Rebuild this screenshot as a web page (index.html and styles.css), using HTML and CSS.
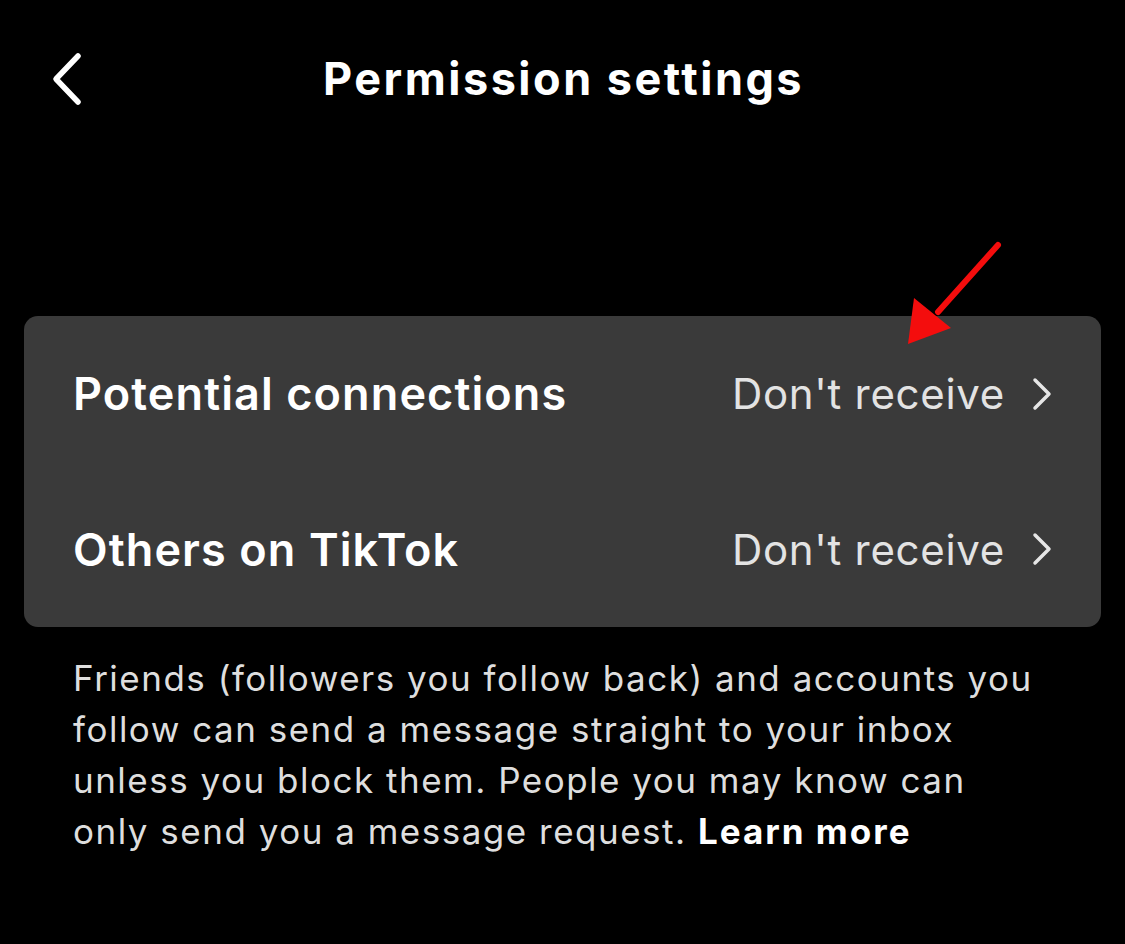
FILE: index.html
```html
<!DOCTYPE html>
<html lang="en">
<head>
  <meta charset="UTF-8" />
  <title>Permission settings</title>
  <link rel="stylesheet" href="styles.css">
</head>
<body>
  <div class="screen">
    <header class="topbar">
      <button class="back" type="button" aria-label="Back">
        <svg width="40" height="56" viewBox="0 0 40 56"><path d="M30 5 L8 28 L30 51" fill="none" stroke="#fff" stroke-width="5.5" stroke-linecap="round" stroke-linejoin="round"/></svg>
      </button>
      <h1>Permission settings</h1>
    </header>

    <div class="card">
      <div class="row">
        <span class="label">Potential connections</span>
        <span class="value">Don't receive
          <svg class="chev" width="22" height="34" viewBox="0 0 22 34"><path d="M4 3 L18 17 L4 31" fill="none" stroke="#e6e6e6" stroke-width="3.5" stroke-linecap="round" stroke-linejoin="round"/></svg>
        </span>
      </div>
      <div class="row">
        <span class="label">Others on TikTok</span>
        <span class="value">Don't receive
          <svg class="chev" width="22" height="34" viewBox="0 0 22 34"><path d="M4 3 L18 17 L4 31" fill="none" stroke="#e6e6e6" stroke-width="3.5" stroke-linecap="round" stroke-linejoin="round"/></svg>
        </span>
      </div>
    </div>

    <p class="note">Friends (followers you follow back) and accounts you follow can send a message straight to your inbox unless you block them. People you may know can only send you a message request. <strong>Learn more</strong></p>

    <svg class="pointer" width="120" height="130" viewBox="0 0 120 130">
      <line x1="105" y1="13" x2="45" y2="80" stroke="#f40d0d" stroke-width="6" stroke-linecap="round"/>
      <polygon points="15,112 21,66 58,96" fill="#f40d0d"/>
    </svg>
  </div>
</body>
</html>
```

FILE: styles.css
```css
* {
  box-sizing: border-box;
  margin: 0;
  padding: 0;
}
html, body {
  background: #000;
}
body {
  font-family: 'Inter', 'Liberation Sans', sans-serif;
  color: #fff;
}
.screen {
  position: relative;
  width: 1125px;
  height: 944px;
  padding: 0 24px;
}
.topbar {
  position: relative;
  height: 160px;
  display: flex;
  align-items: center;
  justify-content: center;
}
.topbar h1 {
  font-size: 45px;
  font-weight: 700;
  letter-spacing: 2.5px;
  margin-top: -3px;
  padding-left: 2px;
}
.back {
  position: absolute;
  left: 24px;
  top: 51px;
  background: none;
  border: none;
  display: flex;
}
.card {
  margin-top: 156px;
  background: #3a3a3a;
  border-radius: 14px;
  padding: 0 48px 0 49px;
}
.row {
  height: 155.5px;
  display: flex;
  align-items: center;
  justify-content: space-between;
}
.label {
  font-size: 45px;
  font-weight: 600;
  letter-spacing: 1.1px;
  color: #fff;
}
.value {
  display: flex;
  align-items: center;
  gap: 26px;
  font-size: 42px;
  font-weight: 400;
  letter-spacing: 0.7px;
  color: #e3e3e3;
}
.note {
  padding: 26px 60px 0 49px;
  font-size: 35px;
  line-height: 51px;
  letter-spacing: 1.5px;
  color: #dedede;
}
.note strong {
  color: #fff;
  font-weight: 700;
  letter-spacing: 2px;
}
.pointer {
  position: absolute;
  left: 893px;
  top: 232px;
}
```
